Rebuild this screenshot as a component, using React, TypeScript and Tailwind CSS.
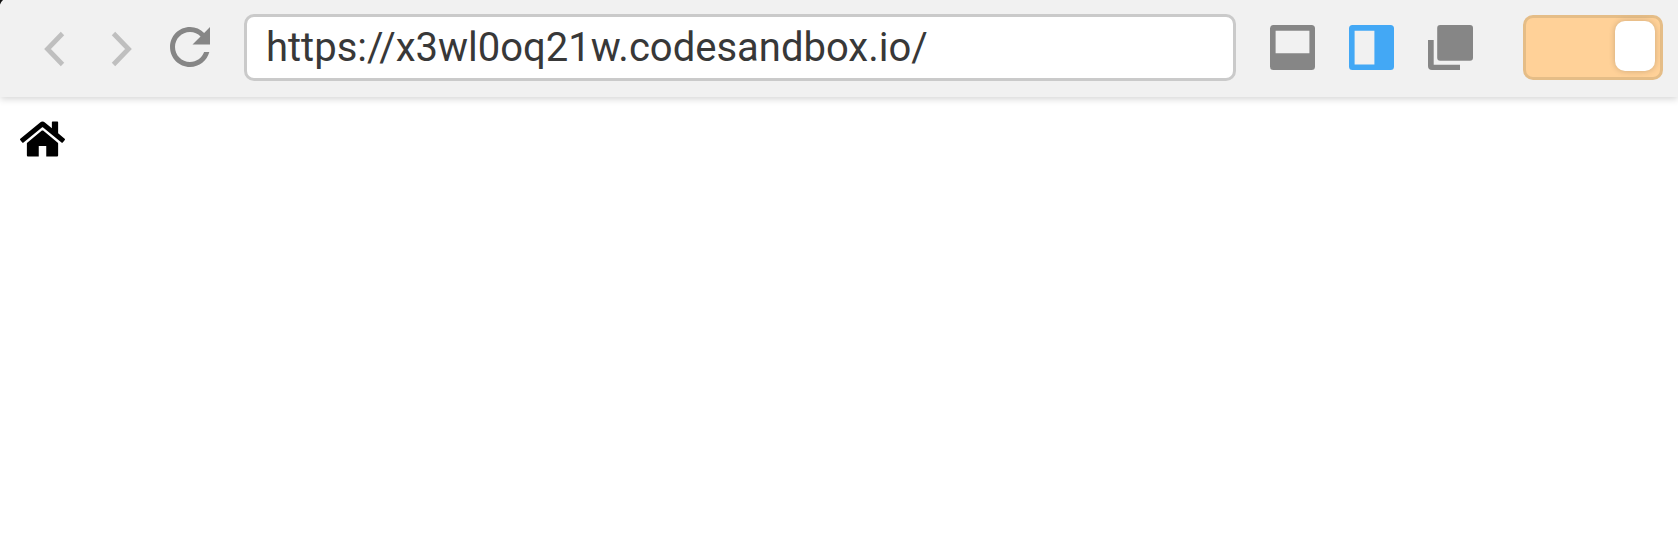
import React from "react";

function Chevron({ points }: { points: string }) {
  return (
    <svg width="24" height="40" viewBox="0 0 24 40" fill="none" stroke="#bfbfbf" strokeWidth="4.8">
      <polyline points={points} />
    </svg>
  );
}

function HomeIcon() {
  return (
    <svg className="h-[40px] w-[45px]" viewBox="0 0 576 512" fill="#000">
      <path d="M488 312.7V464c0 8.800-7.200 16-16 16H336V345H240V480H104c-8.800 0-16-7.200-16-16V312.7c0-3.6 1.6-7 4.4-9.3l188-154.8c4.4-3.6 10.8-3.6 15.3 0l188 154.8c2.7 2.3 4.3 5.7 4.3 9.3zm83.6-60.9L488 182.9V44.4c0-6.6-5.4-12-12-12h-56c-6.6 0-12 5.4-12 12V117l-89.5-73.7c-17.7-14.6-43.3-14.6-61 0L4.4 251.8c-5.1 4.2-5.8 11.8-1.6 16.9l25.5 31c4.2 5.1 11.8 5.8 16.9 1.6l235.2-193.7c4.4-3.6 10.8-3.6 15.3 0l235.2 193.7c5.1 4.2 12.7 3.5 16.9-1.6l25.5-31c4.2-5.2 3.4-12.7-1.7-16.9z" />
    </svg>
  );
}

function Toolbar() {
  return (
    <header className="relative flex h-[97px] items-start bg-[#f1f1f1] shadow-[0_2px_7px_rgba(0,0,0,0.17)]">
      <svg className="absolute left-0 top-0" width="4" height="5" viewBox="0 0 4 5">
        <path d="M0 0H3Q1 1.5 0 4.5Z" fill="#111" />
      </svg>
      <button aria-label="Back" className="mt-[29px] ml-[42px]">
        <Chevron points="20.5,4.5 5.5,20 20.5,35.5" />
      </button>
      <button aria-label="Forward" className="mt-[29px] ml-[44px]">
        <Chevron points="3.5,4.5 18.5,20 3.5,35.5" />
      </button>
      <button aria-label="Refresh" className="mt-[17px] ml-[26px]">
        <svg width="60" height="60" viewBox="0 0 24 24" fill="#868686">
          <path d="M17.65 6.35C16.2 4.9 14.21 4 12 4c-4.42 0-7.99 3.58-7.99 8s3.57 8 7.99 8c3.73 0 6.84-2.55 7.73-6h-2.08c-.82 2.33-3.04 4-5.65 4-3.31 0-6-2.69-6-6s2.69-6 6-6c1.66 0 3.14.69 4.22 1.78L13 11h7V4l-2.35 2.35z" />
        </svg>
      </button>
      <div className="mt-[14px] ml-[24px] flex h-[67px] w-[992px] items-center rounded-[10px] border-[3px] border-[#cacaca] bg-white pl-[19px] font-['Roboto',sans-serif] text-[40px] leading-[60px] text-[#383838]">
        <span>https://x3wl0oq21w.codesandbox.io/</span>
      </div>
      <div className="mt-[25px] ml-[34px] flex gap-[34px]">
        <svg width="45" height="45" viewBox="0 0 45 45" fill="#868686" fillRule="evenodd">
          <path d="M3.5 0H41.5Q45 0 45 3.5V41.5Q45 45 41.5 45H3.5Q0 45 0 41.5V3.5Q0 0 3.5 0ZM5.6 5.7V28.2H39.4V5.7Z" />
        </svg>
        <svg width="45" height="45" viewBox="0 0 45 45" fill="#43a8f5" fillRule="evenodd">
          <path d="M3.5 0H41.5Q45 0 45 3.5V41.5Q45 45 41.5 45H3.5Q0 45 0 41.5V3.5Q0 0 3.5 0ZM5.6 5.7V39.4H25.4V5.7Z" />
        </svg>
        <svg width="45" height="45" viewBox="0 0 45 45" fill="#868686">
          <rect x="9.2" y="0" width="35.8" height="35.8" rx="3" />
          <path d="M0 15H5.7V39.7H32V45H4Q0 45 0 41Z" />
        </svg>
      </div>
      <div className="mt-[15px] ml-[50px] flex h-[65px] w-[140px] justify-end rounded-[10px] border-[3px] border-[#e5bd87] bg-[#ffd198] pt-[3px] pr-[5px]">
        <div className="h-[50px] w-[40px] rounded-[10px] bg-white shadow-[0_0_6px_rgba(0,0,0,0.2)]" />
      </div>
    </header>
  );
}

export default function App() {
  return (
    <div className="h-[534px] w-[1678px] overflow-hidden bg-white">
      <Toolbar />
      <main className="pt-[22px] pl-[20px]">
        <HomeIcon />
      </main>
    </div>
  );
}
